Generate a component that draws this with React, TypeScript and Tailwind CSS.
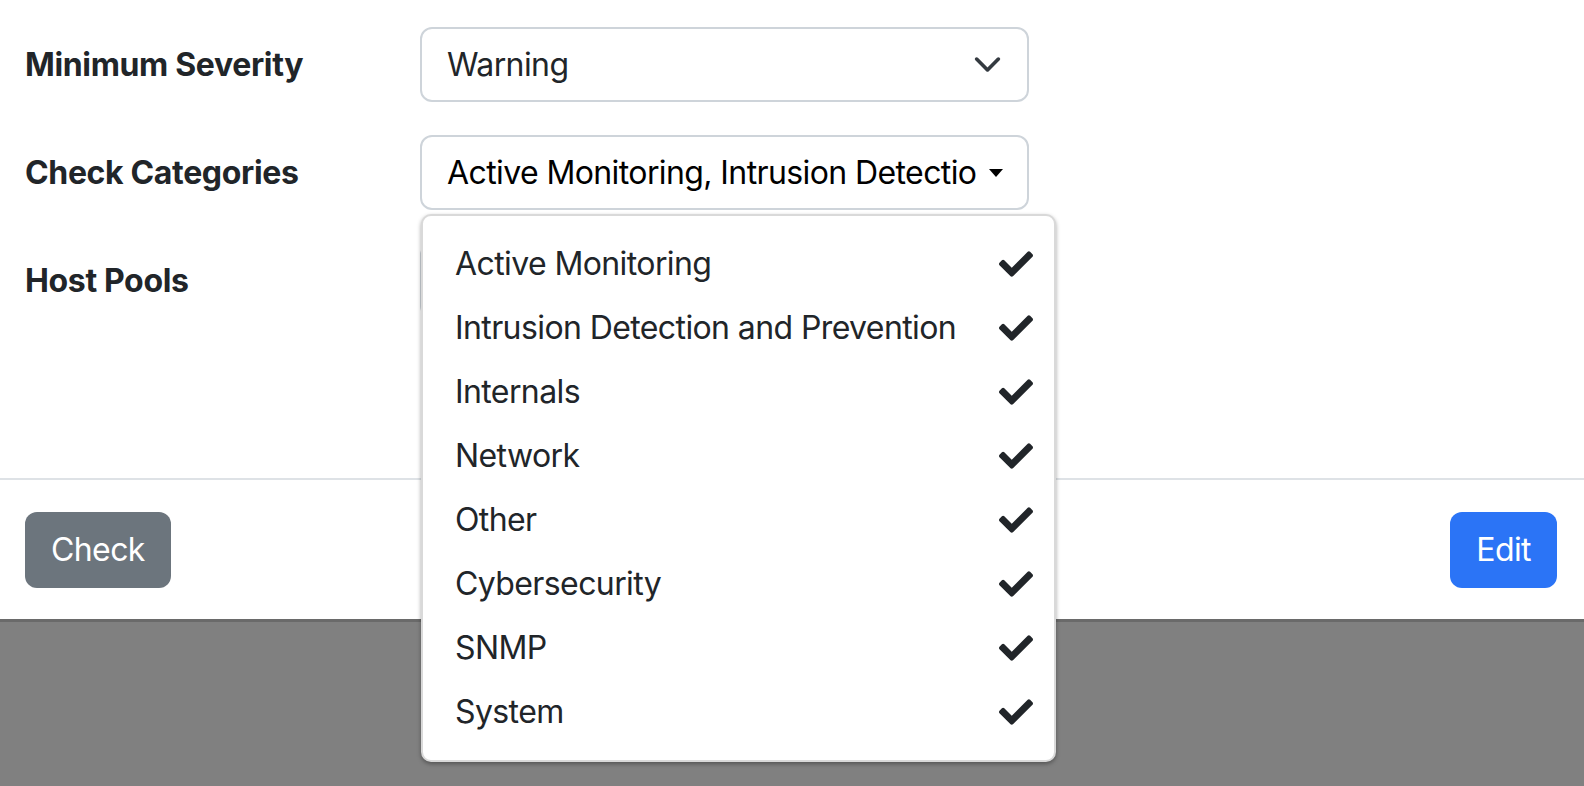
import React from "react";

const categories = [
  "Active Monitoring",
  "Intrusion Detection and Prevention",
  "Internals",
  "Network",
  "Other",
  "Cybersecurity",
  "SNMP",
  "System",
];

function CheckIcon() {
  return (
    <svg viewBox="0 0 512 512" className="w-[34px] h-[34px]" fill="#212529">
      <path d="M173.898 439.404l-166.4-166.4c-9.997-9.997-9.997-26.206 0-36.204l36.203-36.204c9.997-9.998 26.207-9.998 36.204 0L192 312.69 432.095 72.596c9.997-9.997 26.207-9.997 36.204 0l36.203 36.204c9.997 9.997 9.997 26.206 0 36.204l-294.4 294.401c-9.998 9.997-26.207 9.997-36.204-.001z" />
    </svg>
  );
}

function Row({ label, children }: { label: string; children: React.ReactNode }) {
  return (
    <div className="flex items-center">
      <div className="w-[395px] text-[32px] font-bold tracking-[-0.35px] text-[#212529]">{label}</div>
      <div className="relative w-[609px]">{children}</div>
    </div>
  );
}

export default function App() {
  return (
    <div className="w-[1584px] h-[786px] bg-[#808080] overflow-hidden font-['Inter','Liberation_Sans',sans-serif] tracking-[-0.6px]">
      <div className="bg-white border-b-[3px] border-[#6a6a6a]">
        <div className="flex flex-col gap-[33px] pl-[25px] pt-[27px] pb-[160px]">
          <Row label="Minimum Severity">
            {/* Severity select */}
            <div className="flex items-center h-[75px] border-2 border-[#ced4da] rounded-[12px] pl-[25px] pr-[25px]">
              <span className="flex-1 text-[32px] text-[#212529]">Warning</span>
              <svg viewBox="0 0 16 16" className="w-[29px] h-[29px]" fill="none" stroke="#343a40" strokeWidth={2} strokeLinecap="round" strokeLinejoin="round">
                <path d="m2 5 6 6 6-6" />
              </svg>
            </div>
          </Row>

          <Row label="Check Categories">
            <div className="flex items-center h-[75px] border-2 border-[#ced4da] rounded-[12px] pl-[25px] pr-[24px]">
              <span className="flex-1 overflow-hidden whitespace-nowrap text-[32px] text-[#000]">
                Active Monitoring, Intrusion Detection and Prevention, Internals
              </span>
              <span className="ml-[11px] w-0 h-0 border-t-[8px] border-t-[#000] border-x-[7.5px] border-x-transparent" />
            </div>

            {/* Open dropdown menu */}
            <div className="absolute z-10 left-[1px] top-[79px] w-[635px] bg-white border-2 border-[#d9d9d9] rounded-[10px] py-[16px] shadow-[0_2px_4px_rgba(0,0,0,0.35)]">
              {categories.map((c) => (
                <div key={c} className="flex items-center justify-between h-[64px] pl-[32px] pr-[21px]">
                  <span className="text-[32px] text-[#212529] whitespace-nowrap">{c}</span>
                  <CheckIcon />
                </div>
              ))}
            </div>
          </Row>

          <Row label="Host Pools">
            <div className="h-[75px] border-2 border-[#ced4da] rounded-[12px]" />
          </Row>
        </div>

        {/* Footer */}
        <div className="flex items-start justify-between border-t-2 border-[#dee2e6] pl-[25px] pr-[27px] pt-[32px] pb-[31px]">
          <button className="h-[76px] px-[26px] rounded-[12px] bg-[#6c757d] text-white text-[32px]">Check</button>
          <button className="h-[76px] px-[26px] rounded-[12px] bg-[#2b74f6] text-white text-[32px]">Edit</button>
        </div>
      </div>
    </div>
  );
}
